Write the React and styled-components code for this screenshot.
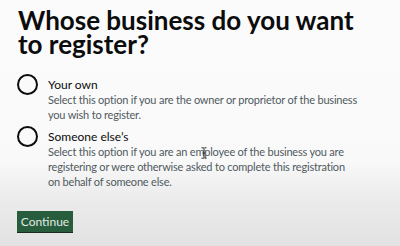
import styled, { createGlobalStyle } from "styled-components";

const GlobalStyle = createGlobalStyle`
  html, body {
    margin: 0;
    padding: 0;
  }
  body {
    width: 400px;
    height: 246px;
    overflow: hidden;
    font-family: Lato, "Liberation Sans", sans-serif;
    color: #0b0c0c;
  }
`;

const options = [
  {
    label: "Your own",
    hint: "Select this option if you are the owner or proprietor of the business you wish to register.",
  },
  {
    label: "Someone else’s",
    hint: "Select this option if you are an employee of the business you are registering or were otherwise asked to complete this registration on behalf of someone else.",
  },
];

const App = () => {
  return (
    <Page>
      <GlobalStyle />
      <Heading>Whose business do you want to register?</Heading>
      <Radios>
        {options.map((o) => (
          <RadioItem key={o.label}>
            <Circle />
            <RadioText>
              <Label>{o.label}</Label>
              <Hint>{o.hint}</Hint>
            </RadioText>
          </RadioItem>
        ))}
      </Radios>
      <Button>Continue</Button>
      <TextCursor width="6" height="12" viewBox="0 0 6 12">
        <path
          d="M0.5 0.8 H2.4 L3 1.4 L3.6 0.8 H5.5 M3 1.4 V10.6 M0.5 11.2 H2.4 L3 10.6 L3.6 11.2 H5.5 M1.5 6 H4.5"
          fill="none"
          stroke="#2b2b2b"
          strokeWidth="1"
        />
      </TextCursor>
    </Page>
  );
};

export default App;

const Page = styled.div`
  position: relative;
  width: 400px;
  height: 246px;
  box-sizing: border-box;
  padding: 8px 17px 0 17px;
  background: linear-gradient(
    to bottom,
    #fbfbfb 0px,
    #f9f9f9 160px,
    #ebebeb 200px,
    #e2e2e2 246px
  );
`;

const Heading = styled.h1`
  margin: 0 0 18px 1px;
  font-size: 26px;
  line-height: 24px;
  font-weight: 700;
  width: 360px;
`;

const Radios = styled.div`
  display: flex;
  flex-direction: column;
  gap: 4px;
`;

const RadioItem = styled.div`
  display: flex;
  align-items: flex-start;
  gap: 10px;
`;

const Circle = styled.div`
  flex: none;
  width: 17px;
  height: 17px;
  border: 2px solid #0b0c0c;
  border-radius: 50%;
`;

const RadioText = styled.div`
  display: flex;
  flex-direction: column;
  padding-top: 3px;
`;

const Label = styled.div`
  font-size: 12px;
  line-height: 15px;
  color: #0b0c0c;
`;

const Hint = styled.div`
  font-size: 11px;
  line-height: 15px;
  letter-spacing: -0.2px;
  color: #505a5f;
  width: 310px;
`;

const Button = styled.button`
  margin-top: 22px;
  width: 56px;
  height: 21px;
  padding: 0;
  border: none;
  border-radius: 0;
  background: #275d3d;
  box-shadow: 0 1px 0 #1a2b20;
  color: #e3e8e4;
  font-family: Lato, "Liberation Sans", sans-serif;
  font-size: 12px;
  cursor: pointer;
`;

const TextCursor = styled.svg`
  position: absolute;
  left: 201px;
  top: 147px;
  pointer-events: none;
`;
